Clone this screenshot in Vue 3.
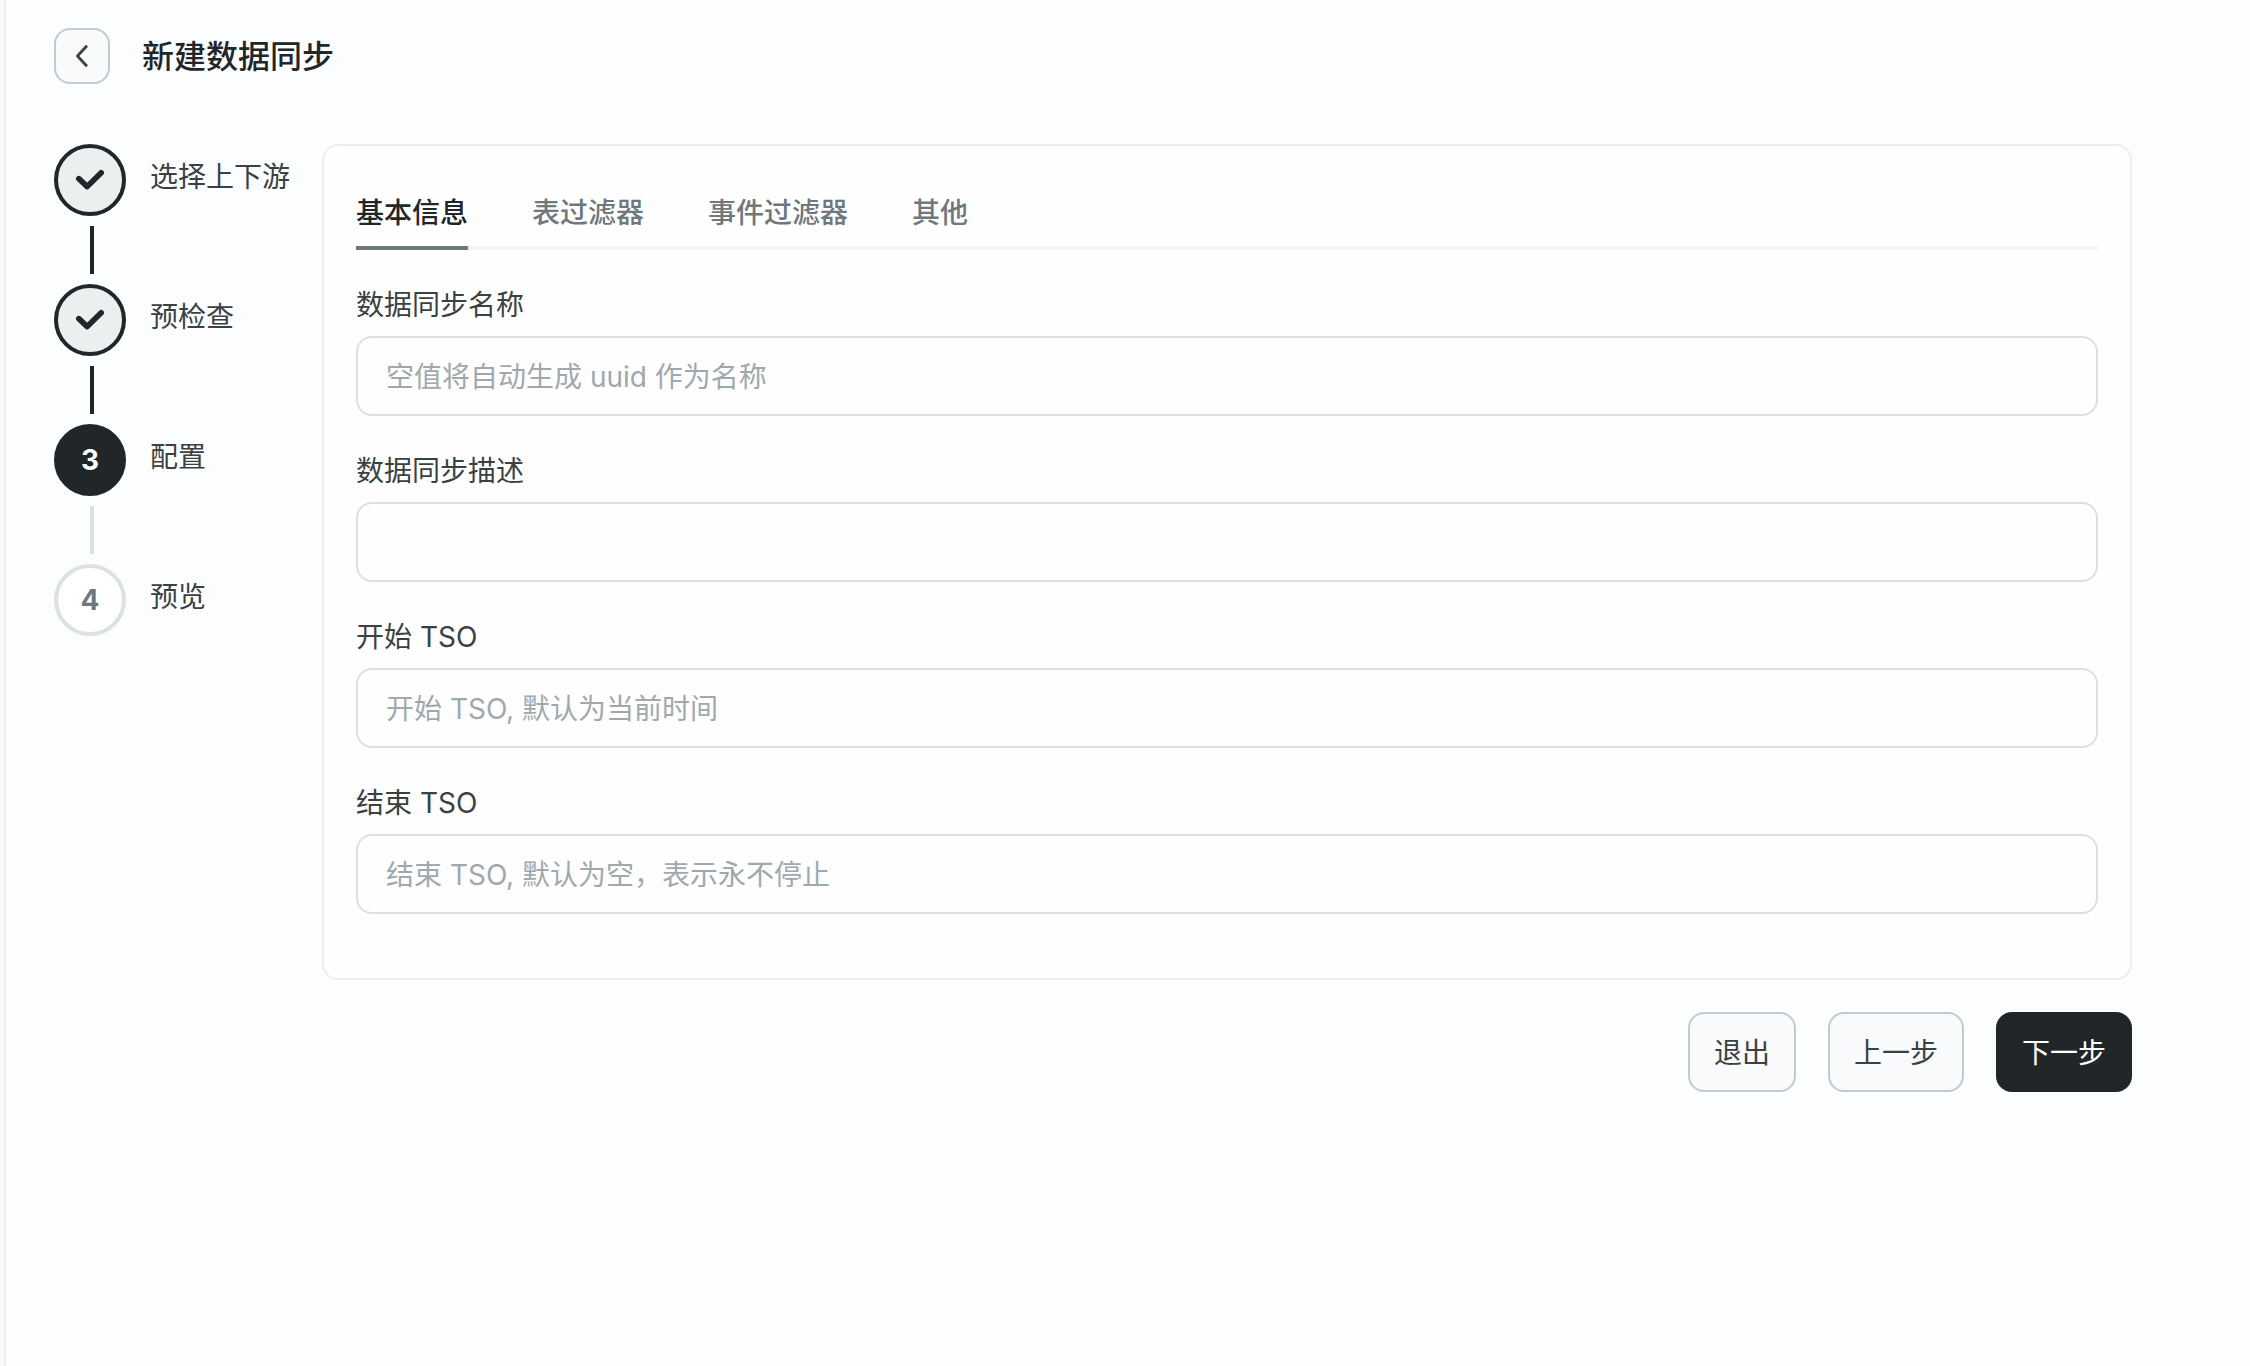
<script setup>
import { ref } from 'vue'

const steps = [
  { title: '选择上下游', state: 'done' },
  { title: '预检查', state: 'done' },
  { title: '配置', state: 'current' },
  { title: '预览', state: 'todo' },
]

const tabs = ['基本信息', '表过滤器', '事件过滤器', '其他']
const activeTab = ref(0)

const fields = ref([
  { id: 'name', label: '数据同步名称', placeholder: '空值将自动生成 uuid 作为名称', value: '' },
  { id: 'description', label: '数据同步描述', placeholder: '', value: '' },
  { id: 'start-tso', label: '开始 TSO', placeholder: '开始 TSO, 默认为当前时间', value: '' },
  { id: 'end-tso', label: '结束 TSO', placeholder: '结束 TSO, 默认为空，表示永不停止', value: '' },
])
</script>

<template>
  <div class="shell">
    <main class="page">
      <header class="header">
        <button type="button" class="back" aria-label="返回">
          <svg width="24" height="24" viewBox="0 0 24 24" fill="none" aria-hidden="true">
            <path d="M17 1.8 L7.4 12 L17 22.2" stroke="currentColor" stroke-width="2.8" stroke-linejoin="round" />
          </svg>
        </button>
        <h1 class="title">新建数据同步</h1>
      </header>

      <div class="body">
        <ol class="steps">
          <li
            v-for="(step, i) in steps"
            :key="step.title"
            class="step"
            :class="step.state"
            :aria-current="step.state === 'current' ? 'step' : undefined"
          >
            <div class="rail">
              <span class="dot">
                <svg v-if="step.state === 'done'" width="36" height="36" viewBox="0 0 36 36" fill="none" aria-hidden="true">
                  <path d="M6.8 16.6 L15.2 24.6 L29.2 10.8" stroke="currentColor" stroke-width="5.6" stroke-linecap="round" stroke-linejoin="round" />
                </svg>
                <template v-else>{{ i + 1 }}</template>
              </span>
              <span v-if="i < steps.length - 1" class="line"></span>
            </div>
            <span class="step-title">{{ step.title }}</span>
          </li>
        </ol>

        <div class="content">
          <section class="card">
            <div class="tabs" role="tablist">
              <button
                v-for="(tab, i) in tabs"
                :key="tab"
                type="button"
                role="tab"
                class="tab"
                :class="{ active: i === activeTab }"
                :aria-selected="i === activeTab"
                @click="activeTab = i"
              >{{ tab }}</button>
            </div>
            <form class="form" @submit.prevent>
              <div v-for="field in fields" :key="field.id" class="field">
                <label class="label" :for="field.id">{{ field.label }}</label>
                <input :id="field.id" v-model="field.value" class="input" type="text" :placeholder="field.placeholder" />
              </div>
            </form>
          </section>

          <footer class="actions">
            <button type="button" class="btn">退出</button>
            <button type="button" class="btn">上一步</button>
            <button type="button" class="btn primary">下一步</button>
          </footer>
        </div>
      </div>
    </main>
  </div>
</template>

<style>
body {
  margin: 0;
  background: #fcfdff;
}
</style>

<style scoped>
.shell {
  box-sizing: border-box;
  min-height: 100vh;
  border-left: 4px solid #f9fafc;
  background: #fcfdff;
  color: #3a4142;
  font-family: Inter, "Noto Sans CJK SC", sans-serif;
  font-size: 28px;
  line-height: 40px;
}

.page {
  box-sizing: border-box;
  min-height: 100vh;
  padding: 28px 118px 28px 48px;
  border-left: 2px solid #ebedf0;
}

button,
input {
  box-sizing: border-box;
  margin: 0;
  font: inherit;
}

button {
  cursor: pointer;
}

.header {
  display: flex;
  align-items: center;
  gap: 32px;
  margin-bottom: 60px;
}

.back {
  display: flex;
  align-items: center;
  justify-content: center;
  width: 56px;
  height: 56px;
  padding: 0;
  border: 2px solid #c2cacd;
  border-radius: 16px;
  background: #f9fafc;
  color: #3a4142;
}

.title {
  margin: 0;
  padding-top: 2px;
  color: #212628;
  font-size: 32px;
  font-weight: 500;
}

.body {
  display: flex;
  align-items: flex-start;
  gap: 32px;
}

.steps {
  flex: none;
  margin: 0;
  padding: 0;
  list-style: none;
}

.step {
  display: flex;
  gap: 24px;
}

.rail {
  display: flex;
  flex-direction: column;
  align-items: center;
}

.dot {
  box-sizing: border-box;
  display: flex;
  align-items: center;
  justify-content: center;
  width: 72px;
  height: 72px;
  border: 4px solid #dce1e2;
  border-radius: 50%;
  background: #fff;
  color: #6f787b;
  font-weight: 700;
}

.done .dot {
  border-color: #212628;
  background: #ebefef;
  color: #212628;
}

.current .dot {
  border-color: #212628;
  background: #212628;
  color: #fff;
}

.line {
  width: 4px;
  height: 48px;
  margin: 10px 0 10px 4px;
  background: #dce1e2;
}

.done .line {
  background: #212628;
}

.step-title {
  padding-top: 13px;
}

.content {
  flex: 1;
  min-width: 0;
}

.card {
  padding: 32px;
  border: 2px solid #ebeeef;
  border-radius: 16px;
  background: #fefefe;
}

.tabs {
  display: flex;
  gap: 64px;
  margin-bottom: 34px;
  border-bottom: 4px solid #f3f3f3;
}

.tab {
  height: 72px;
  margin-bottom: -4px;
  padding: 2px 0 0;
  border: 0;
  border-bottom: 4px solid transparent;
  background: none;
  color: #6f787b;
  font-weight: 500;
}

.tab.active {
  border-bottom-color: #6f787b;
  color: #212628;
}

.form {
  display: grid;
  gap: 34px;
  padding-bottom: 32px;
}

.field {
  display: grid;
  gap: 11px;
}

.label {
  justify-self: start;
  padding-top: 1px;
}

.input {
  width: 100%;
  height: 80px;
  padding: 2px 28px 0;
  border: 2px solid #dae0e3;
  border-radius: 16px;
  background: #fefefe;
  color: #3a4142;
}

.input::placeholder {
  color: #9fa9ad;
  opacity: 1;
}

.actions {
  display: flex;
  justify-content: flex-end;
  gap: 32px;
  margin-top: 32px;
}

.btn {
  height: 80px;
  padding: 2px 24px 0;
  border: 2px solid #c2cacd;
  border-radius: 16px;
  background: #f9fafc;
  color: #3a4142;
}

.btn.primary {
  border-color: #212628;
  background: #212628;
  color: #fff;
}
</style>
